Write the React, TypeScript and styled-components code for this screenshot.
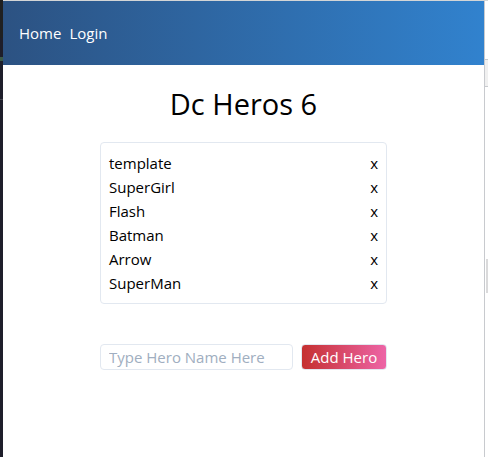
import React, { useState } from "react";
import styled, { createGlobalStyle } from "styled-components";

const GlobalStyle = createGlobalStyle`
  *, *::before, *::after { box-sizing: border-box; }
  body {
    margin: 0;
    background: #ffffff;
    color: #000000;
    font-family: "Open Sans", "Noto Sans", sans-serif;
    font-size: 15px;
    line-height: 24px;
  }
  button, input { font: inherit; color: inherit; margin: 0; }
`;

const Frame = styled.div`
  display: grid;
  grid-template-columns: 3px 1fr 4px;
  min-height: 100vh;
`;

const LeftEdge = styled.div`
  background: linear-gradient(
    #202020 38px,
    #1e1e2a 38px 57px,
    #3c5a48 57px 61px,
    #1e1e2a 61px 99px,
    #44444e 99px 100px,
    #1e1e2a 100px
  );
`;

const RightEdge = styled.div`
  display: flex;
  flex-direction: column;
  border-left: 1px solid #c8cace;
  border-top: 1px solid #d3d5d6;
`;

const EdgeTab = styled.div`
  height: 28px;
  margin-top: 58px;
  border: solid #c8cace;
  border-width: 1px 0;
  background: #f0f0f0;
`;

const EdgeThumb = styled.div`
  height: 34px;
  margin-top: 172px;
  margin-left: 1px;
  background: #dadadb;
`;

const Page = styled.div`
  border-top: 1px solid #d3d5d6;
`;

const NavBar = styled.nav`
  display: flex;
  align-items: center;
  gap: 8px;
  height: 64px;
  padding: 0 16px;
  background: linear-gradient(to right, #2c5282, #3182ce);
`;

const NavLink = styled.a`
  color: #ffffff;
  font-weight: 500;
  text-decoration: none;
`;

const Main = styled.main`
  display: flex;
  flex-direction: column;
  width: fit-content;
  margin: 0 auto;
  padding-top: 16px;
`;

const Title = styled.h1`
  margin: 0 0 16px;
  font-size: 29px;
  font-weight: 400;
  line-height: 45px;
  text-align: center;
`;

const HeroList = styled.ul`
  margin: 0 0 40px;
  padding: 8px;
  border: 1px solid #e2e8f0;
  border-radius: 4px;
  list-style: none;
`;

const HeroRow = styled.li`
  display: flex;
  justify-content: space-between;
`;

const RemoveButton = styled.button`
  padding: 0;
  border: 0;
  background: none;
  cursor: pointer;
`;

const HeroForm = styled.form`
  display: flex;
  gap: 8px;
`;

const NameInput = styled.input`
  width: 193px;
  height: 26px;
  padding: 0 8px;
  border: 1px solid #e2e8f0;
  border-radius: 4px;
  background: #ffffff;
  &::placeholder { color: #a0aec0; opacity: 1; }
`;

const AddButton = styled.button`
  width: 86px;
  height: 26px;
  padding: 0;
  border: 1px solid #e2e8f0;
  border-radius: 4px;
  background: linear-gradient(to right, #c53030, #ed64a6);
  color: #ffffff;
  font-weight: 500;
  white-space: nowrap;
  cursor: pointer;
`;

export default function App() {
  const [heroes, setHeroes] = useState(["template", "SuperGirl", "Flash", "Batman", "Arrow", "SuperMan"]);
  const [name, setName] = useState("");

  const addHero = (event: React.FormEvent) => {
    event.preventDefault();
    if (!name.trim()) return;
    setHeroes([...heroes, name.trim()]);
    setName("");
  };

  return (
    <>
      <GlobalStyle />
      <Frame>
        <LeftEdge />
        <Page>
          <NavBar>
            <NavLink href="#home">Home</NavLink>
            <NavLink href="#login">Login</NavLink>
          </NavBar>
          <Main>
            <Title>Dc Heros {heroes.length}</Title>
            <HeroList>
              {heroes.map((hero, index) => (
                <HeroRow key={hero + index}>
                  <span>{hero}</span>
                  <RemoveButton
                    type="button"
                    aria-label={`Remove ${hero}`}
                    onClick={() => setHeroes(heroes.filter((_, i) => i !== index))}
                  >
                    x
                  </RemoveButton>
                </HeroRow>
              ))}
            </HeroList>
            <HeroForm onSubmit={addHero}>
              <NameInput
                aria-label="Hero name"
                placeholder="Type Hero Name Here"
                value={name}
                onChange={(event) => setName(event.target.value)}
              />
              <AddButton type="submit">Add Hero</AddButton>
            </HeroForm>
          </Main>
        </Page>
        <RightEdge>
          <EdgeTab />
          <EdgeThumb />
        </RightEdge>
      </Frame>
    </>
  );
}
